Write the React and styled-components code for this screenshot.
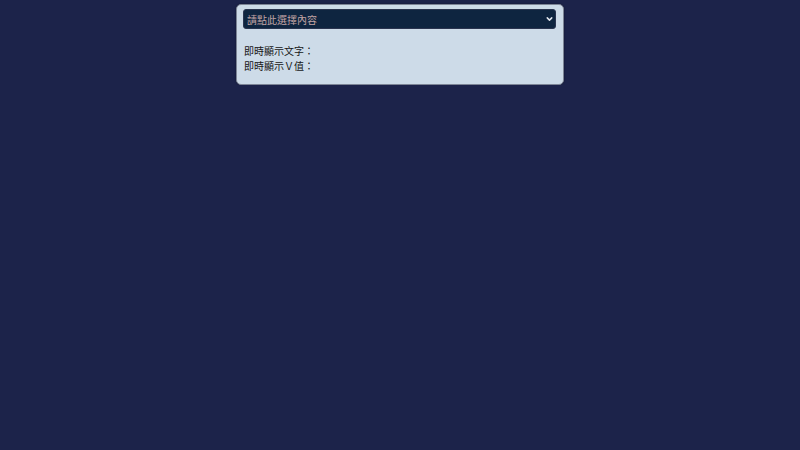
import React, { useState } from 'react';
import styled, { createGlobalStyle } from 'styled-components';
import { FiChevronDown } from 'react-icons/fi';

const GlobalStyle = createGlobalStyle`
  html, body {
    margin: 0;
    padding: 0;
    background: #1c234a;
    font-family: "Noto Sans CJK TC", "Noto Sans", sans-serif;
  }
`;

const Panel = styled.div`
  box-sizing: border-box;
  width: 328px;
  margin: 4px auto 0;
  padding: 4px 7px 11px 6px;
  background: #cddbe8;
  border: 1px solid #7d8596;
  border-radius: 5px;
  box-shadow: 0 0 2px rgba(0, 0, 0, 0.4);
`;

const SelectWrap = styled.div`
  position: relative;
  display: flex;
  .chevron {
    position: absolute;
    right: 2px;
    top: 50%;
    transform: translateY(-50%);
    color: #dfe4ec;
    font-size: 9px;
    stroke-width: 4;
    pointer-events: none;
  }
`;

const Select = styled.select`
  appearance: none;
  box-sizing: border-box;
  width: 100%;
  height: 20px;
  margin: 0;
  padding: 0 16px 0 3px;
  background: #0e2540;
  color: #c4a5a6;
  border: 1px solid #2a3550;
  border-radius: 3px;
  font-family: "Noto Sans CJK TC", sans-serif;
  font-size: 10px;
  outline: none;
`;

const Info = styled.div`
  margin-top: 14px;
  padding-left: 1px;
  color: #151515;
  font-size: 10px;
  line-height: 15px;
`;

export default function App() {
  const [value, setValue] = useState('');
  const options = { a: { text: '選項一', v: '1' }, b: { text: '選項二', v: '2' } };
  const picked = options[value];

  return (
    <>
      <GlobalStyle />
      <Panel>
        <SelectWrap>
          <Select value={value} onChange={e => setValue(e.target.value)}>
            <option value="">請點此選擇內容</option>
            <option value="a">選項一</option>
            <option value="b">選項二</option>
          </Select>
          <FiChevronDown className="chevron" />
        </SelectWrap>
        <Info>
          <div>即時顯示文字：{picked ? picked.text : ''}</div>
          <div>即時顯示Ｖ值：{picked ? picked.v : ''}</div>
        </Info>
      </Panel>
    </>
  );
}
